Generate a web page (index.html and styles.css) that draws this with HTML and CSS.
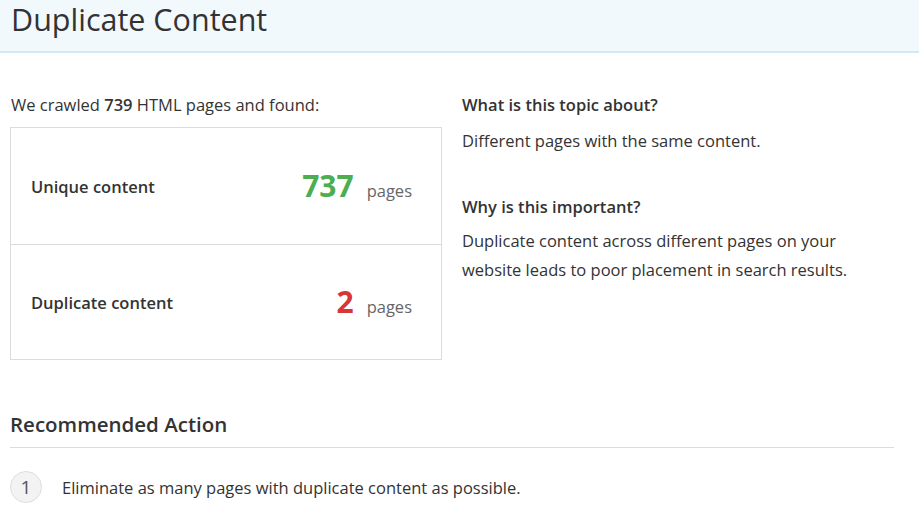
FILE: index.html
```html
<!DOCTYPE html>
<html>
<head>
<meta charset="utf-8">
<link rel="stylesheet" href="styles.css">
</head>
<body>
<header class="page-header">
  <h1 class="page-title">Duplicate Content</h1>
</header>
<main class="content">
  <section class="overview">
    <div class="results">
      <p class="intro">We crawled <strong>739</strong> HTML pages and found:</p>
      <div class="card">
        <div class="row">
          <span class="label">Unique content</span>
          <span class="value"><span class="num good">737</span><span class="unit">pages</span></span>
        </div>
        <div class="row">
          <span class="label">Duplicate content</span>
          <span class="value"><span class="num bad">2</span><span class="unit">pages</span></span>
        </div>
      </div>
    </div>
    <div class="info">
      <h3 class="info-title">What is this topic about?</h3>
      <p class="info-text">Different pages with the same content.</p>
      <h3 class="info-title second">Why is this important?</h3>
      <p class="info-text">Duplicate content across different pages on your website leads to poor placement in search results.</p>
    </div>
  </section>
  <section class="actions">
    <h2 class="actions-title">Recommended Action</h2>
    <ol class="action-list">
      <li class="action"><span class="step">1</span><span class="action-text">Eliminate as many pages with duplicate content as possible.</span></li>
    </ol>
  </section>
</main>
</body>
</html>
```
FILE: styles.css
```css
* { box-sizing: border-box; }
html, body {
  margin: 0;
  padding: 0;
  background: #fff;
  font-family: "Open Sans", "Liberation Sans", sans-serif;
  color: #333;
}
.page-header {
  width: 919px;
  height: 53px;
  background: #f1f9fd;
  border-bottom: 2px solid #cfeaf2;
  padding: 0 11px;
}
.page-title {
  margin: 0;
  font-size: 30.5px;
  font-weight: 400;
  line-height: 38px;
  color: #333;
}
.content {
  padding: 41px 0 0 10px;
}
.overview {
  display: flex;
  gap: 20px;
}
.results {
  width: 432px;
  flex: none;
}
.intro {
  margin: 0 0 11px 1px;
  font-size: 16.5px;
  line-height: 22px;
}
.intro strong { font-weight: 600; }
.card {
  border: 1px solid #dcdcdc;
}
.row {
  height: 116px;
  display: flex;
  align-items: center;
  justify-content: space-between;
  padding: 0 29px 0 20px;
}
.row + .row {
  border-top: 1px solid #dcdcdc;
  height: 115px;
}
.label {
  font-size: 16.5px;
  font-weight: 600;
}
.value {
  display: flex;
  align-items: baseline;
  gap: 13px;
  padding-top: 0;
}
.num {
  font-size: 30px;
  font-weight: 700;
  line-height: 36px;
}
.num.good { color: #4cae50; }
.num.bad { color: #d8353a; }
.unit {
  font-size: 16.5px;
  color: #666;
}
.info {
  flex: 1;
}
.info-title {
  margin: 0 0 10px;
  font-size: 16.5px;
  font-weight: 600;
  line-height: 22px;
}
.info-title.second { margin-top: 41px; margin-bottom: 8px; }
.info-text {
  margin: 0;
  font-size: 16.5px;
  line-height: 29px;
  max-width: 400px;
}
.actions {
  margin-top: 50px;
  width: 884px;
}
.actions-title {
  margin: 0;
  padding-bottom: 9px;
  border-bottom: 1px solid #dcdcdc;
  font-size: 20.5px;
  font-weight: 600;
  line-height: 28px;
}
.action-list {
  list-style: none;
  margin: 23px 0 0;
  padding: 0;
}
.action {
  display: flex;
  align-items: center;
  gap: 20px;
}
.step {
  width: 32px;
  height: 32px;
  border-radius: 50%;
  background: #f3f3f3;
  border: 1px solid #dedede;
  display: flex;
  align-items: center;
  justify-content: center;
  font-size: 19px;
  color: #555;
  flex: none;
}
.action-text {
  font-size: 16.5px;
}
```
